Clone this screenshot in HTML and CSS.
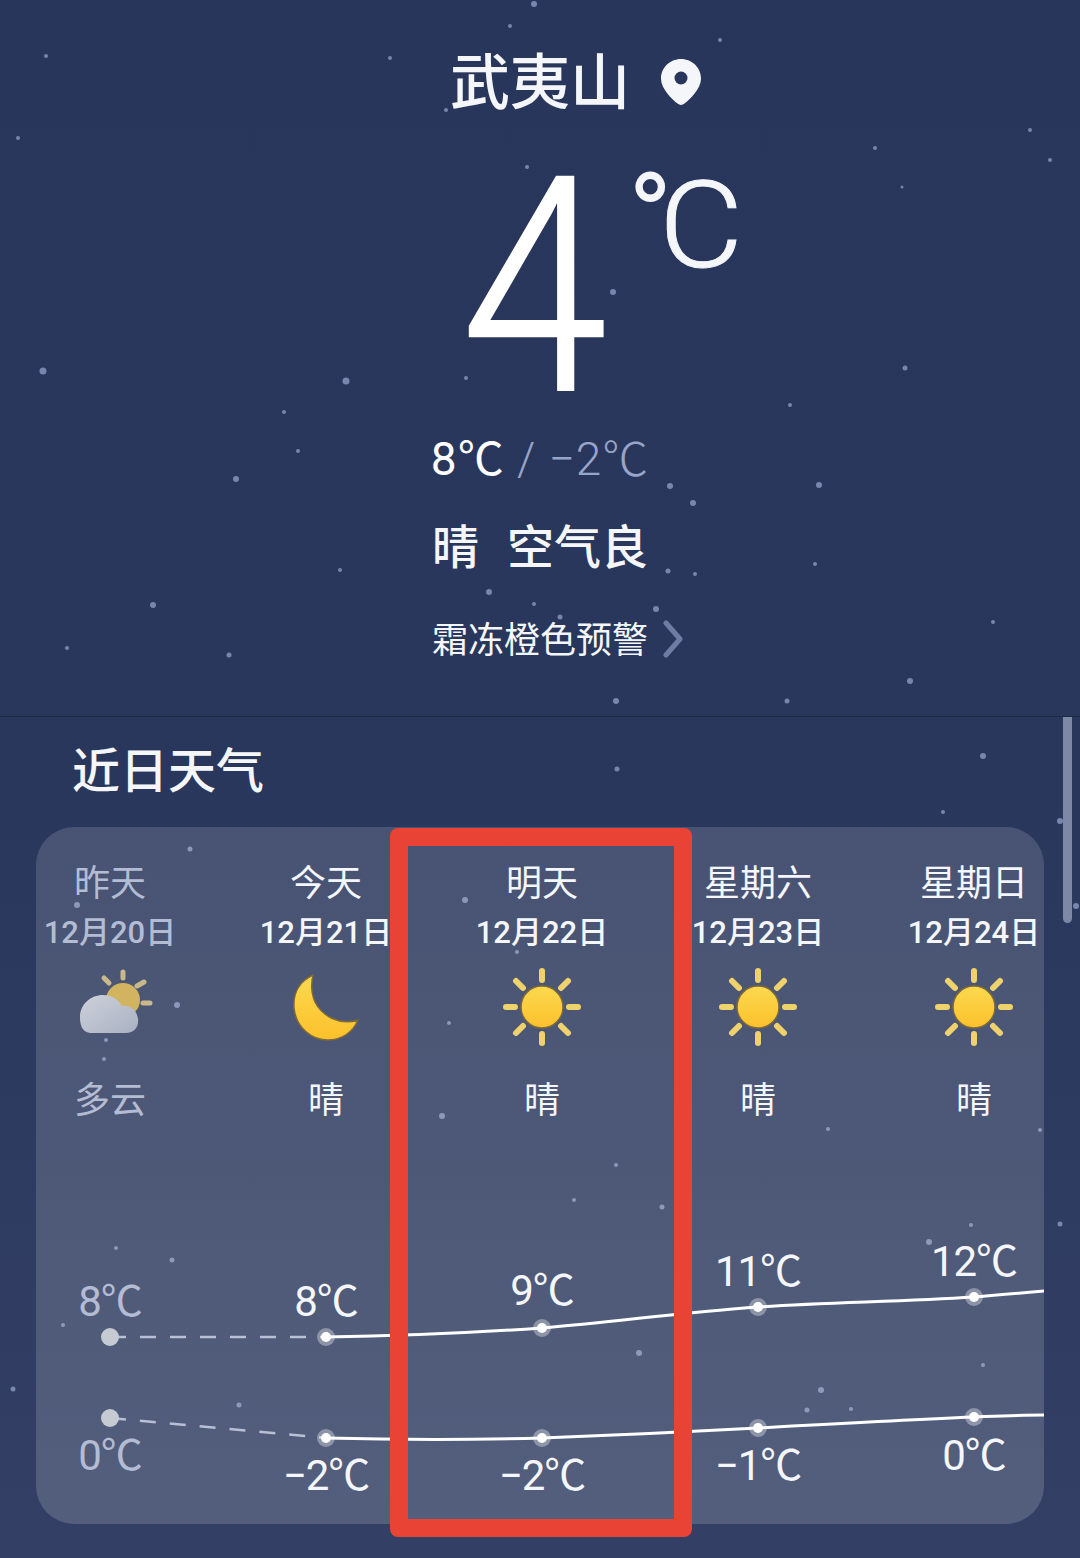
FILE: index.html
```html
<!DOCTYPE html>
<html lang="zh-CN">
<head>
    <meta charset="UTF-8">
    <meta name="viewport" content="width=device-width, initial-scale=1.0">
    <title>武夷山天气</title>
    <link rel="stylesheet" href="styles.css">
</head>
<body>
    <svg class="stars" viewBox="0 0 1080 1558" aria-hidden="true">
        <g fill="#93a0c8">
            <circle cx="534" cy="4" r="3"/><circle cx="510" cy="26" r="2"/><circle cx="720" cy="40" r="2"/><circle cx="390" cy="58" r="2"/>
            <circle cx="46" cy="56" r="2"/><circle cx="446" cy="110" r="2"/><circle cx="527" cy="167" r="2"/><circle cx="18" cy="138" r="2"/>
            <circle cx="875" cy="148" r="2"/><circle cx="1030" cy="130" r="2"/><circle cx="902" cy="187" r="1.5"/><circle cx="1050" cy="160" r="2"/>
            <circle cx="613" cy="292" r="3"/><circle cx="593" cy="324" r="2.5"/><circle cx="466" cy="378" r="2"/><circle cx="43" cy="371" r="3.5"/>
            <circle cx="346" cy="381" r="3.5"/><circle cx="284" cy="412" r="2"/><circle cx="905" cy="368" r="2.5"/><circle cx="790" cy="405" r="2"/>
            <circle cx="298" cy="451" r="2"/><circle cx="236" cy="479" r="3"/><circle cx="819" cy="485" r="3"/><circle cx="670" cy="486" r="3"/>
            <circle cx="693" cy="503" r="3"/><circle cx="668" cy="571" r="2.5"/><circle cx="695" cy="574" r="2"/><circle cx="815" cy="564" r="2"/>
            <circle cx="489" cy="592" r="3"/><circle cx="534" cy="604" r="2"/><circle cx="560" cy="617" r="2.5"/><circle cx="656" cy="609" r="3"/>
            <circle cx="153" cy="605" r="3"/><circle cx="67" cy="648" r="2"/><circle cx="229" cy="655" r="2.5"/><circle cx="910" cy="681" r="3"/>
            <circle cx="616" cy="701" r="3"/><circle cx="787" cy="701" r="2.5"/><circle cx="993" cy="622" r="2"/><circle cx="340" cy="570" r="2"/>
            <circle cx="983" cy="756" r="3"/><circle cx="617" cy="769" r="2.5"/><circle cx="943" cy="812" r="2"/><circle cx="1060" cy="821" r="3"/>
            <circle cx="1076" cy="906" r="3"/><circle cx="190" cy="849" r="2.5"/><circle cx="77" cy="905" r="3"/><circle cx="177" cy="1005" r="3"/>
            <circle cx="106" cy="1040" r="2"/><circle cx="104" cy="1059" r="2"/><circle cx="465" cy="900" r="3"/><circle cx="449" cy="1023" r="2"/>
            <circle cx="442" cy="1116" r="3"/><circle cx="517" cy="952" r="2"/><circle cx="828" cy="1129" r="2"/><circle cx="662" cy="1207" r="2.5"/>
            <circle cx="616" cy="1165" r="2"/><circle cx="574" cy="1200" r="2"/><circle cx="172" cy="1260" r="2.5"/><circle cx="116" cy="1248" r="2"/>
            <circle cx="63" cy="1325" r="2"/><circle cx="239" cy="1405" r="2.5"/><circle cx="13" cy="1389" r="2.5"/><circle cx="639" cy="1353" r="3"/>
            <circle cx="821" cy="1390" r="3"/><circle cx="807" cy="1410" r="2.5"/><circle cx="851" cy="1409" r="2"/><circle cx="983" cy="1365" r="2"/>
            <circle cx="929" cy="1242" r="3"/><circle cx="971" cy="1225" r="2"/><circle cx="1060" cy="1224" r="2.5"/><circle cx="1040" cy="1130" r="2"/>
        </g>
    </svg>

    <section class="current">
        <h1 class="city">
            <span>武夷山</span>
            <svg class="pin" viewBox="0 0 42 48">
                <path d="M21 1C9.700 1 1 10 1 20.500C1 31 12 41 17.500 45.600C19.600 47.400 22.400 47.400 24.500 45.600C30 41 41 31 41 20.500C41 10 32.300 1 21 1Z" fill="#f4f6fa"/>
                <circle cx="21" cy="20" r="6.500" fill="#29365c"/>
            </svg>
        </h1>
        <div class="now">
            <span class="now-value">4</span>
            <div class="now-unit"><span class="now-deg">°</span><span class="now-c">C</span></div>
        </div>
        <div class="range">8℃<span class="range-low"> / −2℃</span></div>
        <div class="summary"><span>晴</span><span>空气良</span></div>
        <div class="warning">
            <span>霜冻橙色预警</span>
            <svg class="chevron" viewBox="0 0 20 38"><path d="M3 3L17 19L3 35" fill="none" stroke="#6f7ba2" stroke-width="5" stroke-linecap="round" stroke-linejoin="round"/></svg>
        </div>
    </section>

    <section class="forecast">
        <div class="scrollbar"></div>
        <h2 class="forecast-title">近日天气</h2>
        <div class="card">
            <div class="days">
                <div class="day past">
                    <div class="day-name">昨天</div>
                    <div class="day-date">12月20日</div>
                    <svg class="day-icon" viewBox="65 965 90 84"><use href="#cloud-sun"/></svg>
                    <div class="day-text">多云</div>
                </div>
                <div class="day">
                    <div class="day-name">今天</div>
                    <div class="day-date">12月21日</div>
                    <svg class="day-icon" viewBox="281 965 90 84"><use href="#moon"/></svg>
                    <div class="day-text">晴</div>
                </div>
                <div class="day">
                    <div class="day-name">明天</div>
                    <div class="day-date">12月22日</div>
                    <svg class="day-icon" viewBox="-45 -42 90 84"><use href="#sun"/></svg>
                    <div class="day-text">晴</div>
                </div>
                <div class="day">
                    <div class="day-name">星期六</div>
                    <div class="day-date">12月23日</div>
                    <svg class="day-icon" viewBox="-45 -42 90 84"><use href="#sun"/></svg>
                    <div class="day-text">晴</div>
                </div>
                <div class="day">
                    <div class="day-name">星期日</div>
                    <div class="day-date">12月24日</div>
                    <svg class="day-icon" viewBox="-45 -42 90 84"><use href="#sun"/></svg>
                    <div class="day-text">晴</div>
                </div>
            </div>

            <!-- chart uses page coordinates so the points read like the data -->
            <svg class="chart" viewBox="36 827 1008 697">
                <path class="line-past" d="M110 1337L326 1337"/>
                <path class="line-past" d="M110 1418L326 1438"/>
                <path class="line" d="M326 1337C400 1336 470 1333 542 1328C615 1322 685 1312 758 1307C830 1302 900 1302 974 1297C1000 1295 1022 1293 1044 1291"/>
                <path class="line" d="M326 1438C400 1440 470 1440 542 1438C615 1435 685 1432 758 1428C830 1424 900 1420 974 1417C1000 1416 1022 1415 1044 1415"/>

                <circle class="dot-past" cx="110" cy="1337" r="9"/>
                <circle class="dot-past" cx="110" cy="1418" r="9"/>
                <g class="dots">
                    <circle cx="326" cy="1337" r="9"/><circle cx="542" cy="1328" r="9"/><circle cx="758" cy="1307" r="9"/><circle cx="974" cy="1297" r="9"/>
                    <circle cx="326" cy="1438" r="9"/><circle cx="542" cy="1438" r="9"/><circle cx="758" cy="1428" r="9"/><circle cx="974" cy="1417" r="9"/>
                </g>
                <g fill="#fff">
                    <circle cx="326" cy="1337" r="5"/><circle cx="542" cy="1328" r="5"/><circle cx="758" cy="1307" r="5"/><circle cx="974" cy="1297" r="5"/>
                    <circle cx="326" cy="1438" r="5"/><circle cx="542" cy="1438" r="5"/><circle cx="758" cy="1428" r="5"/><circle cx="974" cy="1417" r="5"/>
                </g>

                <text class="temp temp-past" x="110" y="1316">8℃</text>
                <text class="temp temp-past" x="110" y="1470">0℃</text>
                <text class="temp" x="326" y="1316">8℃</text>
                <text class="temp" x="326" y="1490">−2℃</text>
                <text class="temp" x="542" y="1305">9℃</text>
                <text class="temp" x="542" y="1490">−2℃</text>
                <text class="temp" x="758" y="1286">11℃</text>
                <text class="temp" x="758" y="1480">−1℃</text>
                <text class="temp" x="974" y="1276">12℃</text>
                <text class="temp" x="974" y="1470">0℃</text>
            </svg>
        </div>
        <div class="highlight"></div>
    </section>

    <svg class="icon-defs" aria-hidden="true">
        <defs>
            <linearGradient id="sun-fill" x1="0" y1="0" x2="0" y2="1">
                <stop offset="0" stop-color="#fbd94f"/>
                <stop offset="1" stop-color="#fcc12c"/>
            </linearGradient>
            <linearGradient id="cloud-fill" x1="0" y1="0" x2="1" y2="1">
                <stop offset="0" stop-color="#cdd1da"/>
                <stop offset="1" stop-color="#a9b1c2"/>
            </linearGradient>
            <g id="sun">
                <g stroke="#f0d26c" stroke-width="6" stroke-linecap="round">
                    <path d="M0 -36L0 -27M0 27L0 36M-36 0L-27 0M27 0L36 0"/>
                    <path d="M-26 -26L-19 -19M19 19L26 26M-26 26L-19 19M19 -19L26 -26"/>
                </g>
                <circle r="21" fill="url(#sun-fill)" stroke="#7d6a3a" stroke-width="1.500"/>
            </g>
            <g id="moon">
                <path d="M313 975C298 982 293 995 294 1008C296 1028 312 1040 328 1040C342 1040 353 1032 358 1020C340 1026 322 1016 315 1002C311 993 311 984 313 975Z" fill="url(#sun-fill)" stroke="#7d6a3a" stroke-width="1.500" stroke-linejoin="round"/>
            </g>
            <g id="cloud-sun">
                <g stroke="#c9b98a" stroke-width="5" stroke-linecap="round">
                    <path d="M123 972L123 978M104 978L109 983M137 986L144 982M143 1003L150 1003"/>
                </g>
                <circle cx="123" cy="1000" r="17" fill="#d2b35f"/>
                <path d="M90 1033C82 1032 80 1025 80 1017C80 1004 91 995 103 995C112 995 118 999 122 1006C130 1005 137 1010 138 1019C139 1028 133 1033 126 1033Z" fill="url(#cloud-fill)"/>
            </g>
        </defs>
    </svg>
</body>
</html>
```

FILE: styles.css
```css
* {
    box-sizing: border-box;
}
body {
    margin: 0;
    width: 1080px;
    height: 1558px;
    overflow: hidden;
    position: relative;
    font-family: Roboto, "Noto Sans CJK SC", sans-serif;
    color: #f4f6fa;
    background: linear-gradient(#29365b 0%, #2a375c 50%, #333f64 100%);
}
.stars {
    position: absolute;
    left: 0;
    top: 0;
    width: 1080px;
    height: 1558px;
    opacity: 0.75;
}
.icon-defs {
    position: absolute;
    width: 0;
    height: 0;
}
.current {
    position: relative;
    height: 717px;
    padding-top: 52px;
    border-bottom: 1px solid #1e2947;
    display: flex;
    flex-direction: column;
    align-items: center;
}
.city {
    margin: 0;
    padding-left: 72px;
    display: flex;
    align-items: center;
    gap: 30px;
    height: 64px;
    font-size: 60px;
    line-height: 64px;
    font-weight: 500;
}
.pin {
    width: 42px;
    height: 48px;
    margin-top: -4px;
}
.now {
    display: flex;
    align-items: flex-start;
    height: 300px;
    margin-top: 22px;
    padding-left: 111px;
}
.now-value {
    font-size: 300px;
    line-height: 300px;
    font-weight: 300;
    color: #fff;
    transform: scaleX(0.88);
    -webkit-text-stroke: 2px #fff;
}
.now-unit {
    display: flex;
    align-items: flex-start;
    width: 122px;
    font-size: 120px;
    line-height: 120px;
    font-weight: 300;
}
.now-deg {
    margin-top: 20px;
    margin-left: 10px;
    font-weight: 400;
    letter-spacing: -14px;
}
.now-c {
    margin-top: 28px;
    transform: scaleX(1.08);
    transform-origin: left;
    -webkit-text-stroke: 1px #f4f6fa;
}
.range {
    margin-top: -7px;
    font-size: 46px;
    line-height: 56px;
    font-weight: 400;
    letter-spacing: 1px;
    color: #fff;
}
.range-low {
    color: #98a4c8;
    font-weight: 300;
}
.summary {
    display: flex;
    gap: 28px;
    margin-top: 33px;
    font-size: 47px;
    line-height: 56px;
    font-weight: 500;
}
.warning {
    position: relative;
    margin-top: 42px;
    font-size: 36px;
    line-height: 46px;
}
.chevron {
    position: absolute;
    left: 231px;
    top: 2px;
    width: 20px;
    height: 38px;
}
.forecast {
    position: relative;
    padding-top: 26px;
}
.scrollbar {
    position: absolute;
    left: 1063px;
    top: 0;
    width: 9px;
    height: 206px;
    border-radius: 0 0 5px 5px;
    background-color: #7d87a6;
}
.forecast-title {
    margin: 0 0 26px 72px;
    font-size: 48px;
    line-height: 58px;
    font-weight: 500;
}
.card {
    position: relative;
    width: 1008px;
    height: 697px;
    margin-left: 36px;
    border-radius: 38px;
    overflow: hidden;
    background: linear-gradient(rgba(255, 255, 255, 0.14), rgba(255, 255, 255, 0.16));
}
.days {
    display: grid;
    grid-template-columns: repeat(5, 216px);
    margin-left: -34px;
    padding-top: 33px;
}
.day {
    display: flex;
    flex-direction: column;
    align-items: center;
}
.day.past {
    color: #b4bcd4;
}
.day-name {
    font-size: 36px;
    line-height: 48px;
}
.day-date {
    font-size: 31px;
    line-height: 44px;
    margin-top: 3px;
    font-weight: 500;
    white-space: nowrap;
}
.day-icon {
    width: 90px;
    height: 84px;
    margin-top: 10px;
}
.day-text {
    font-size: 36px;
    line-height: 48px;
    margin-top: 28px;
}
.chart {
    position: absolute;
    left: 0;
    top: 0;
    width: 1008px;
    height: 697px;
}
.line {
    fill: none;
    stroke: #fff;
    stroke-width: 3;
}
.line-past {
    fill: none;
    stroke: #b8c0d4;
    stroke-width: 2.500;
    stroke-dasharray: 16 14;
}
.dot-past {
    fill: #c5cad3;
}
.dots {
    fill: rgba(255, 255, 255, 0.35);
}
.temp {
    fill: #f4f6fa;
    font-size: 42px;
    font-weight: 400;
    letter-spacing: -1px;
    text-anchor: middle;
}
.temp-past {
    fill: #b4bcd4;
}
.highlight {
    position: absolute;
    left: 390px;
    top: 111px;
    width: 302px;
    height: 709px;
    border: 18px solid #e94335;
    border-radius: 8px;
}
```
